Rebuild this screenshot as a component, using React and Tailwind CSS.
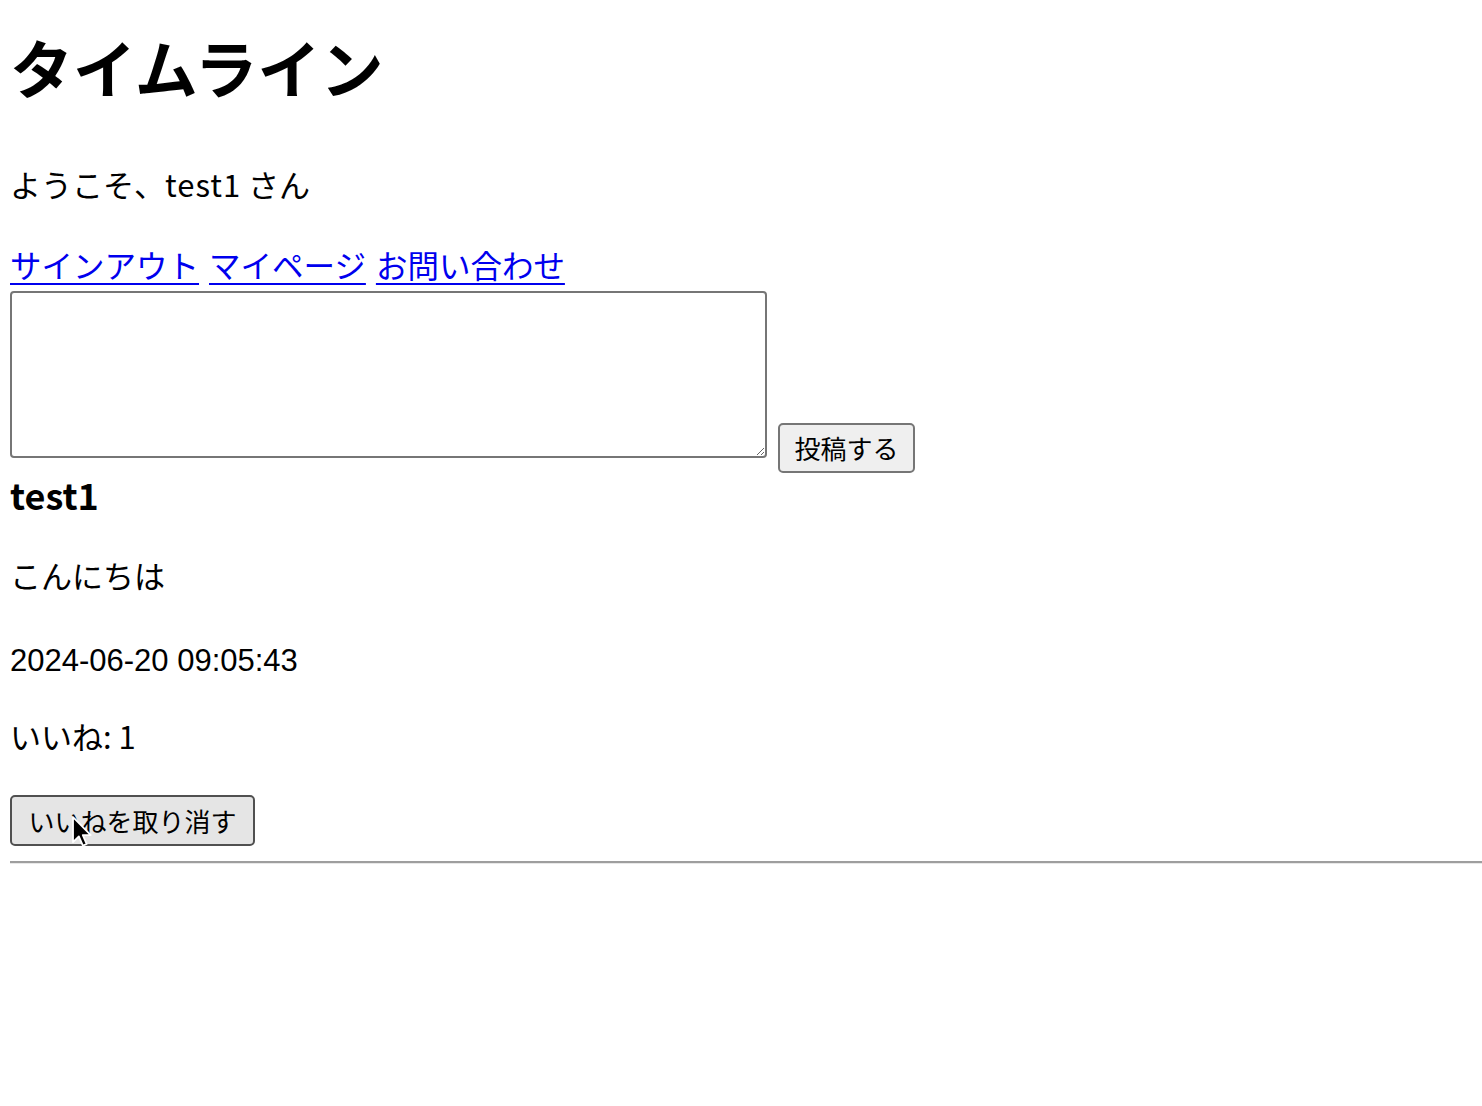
import React from 'react';

const jp = "font-['Noto_Sans_CJK_JP','Noto_Sans',sans-serif]";

const Cursor = () => (
  <svg className="absolute left-[61px] top-[20px] w-[23px] h-[34px] pointer-events-none" viewBox="0 0 17 25">
    <path
      d="M1.5 1.5 L1.5 20 L5.8 15.8 L8.8 22.6 L11.6 21.4 L8.7 14.8 L14.6 14.8 Z"
      fill="#000"
      stroke="#fff"
      strokeWidth="1.3"
      strokeLinejoin="round"
    />
  </svg>
);

const Timeline = () => {
  const posts = [
    { id: 1, user: 'test1', body: 'こんにちは', createdAt: '2024-06-20 09:05:43', likes: 1 },
  ];

  return (
    <div className={`min-h-screen bg-white text-black ${jp}`}>
      <div className="pl-[10px]">
        <h1 className="mt-[16px] h-[100px] text-[63px] leading-[100px] font-bold">タイムライン</h1>

        <p className="mt-[43px] text-[31px] leading-[50px]">
          ようこそ、<span className="tracking-[1px]">test1</span> さん
        </p>

        <div className="mt-[30px] text-[31.5px] leading-[50px] text-[#0000ee] flex gap-[10px]">
          <a href="#" className="underline underline-offset-[5px] decoration-2">サインアウト</a>
          <a href="#" className="underline underline-offset-[5px] decoration-2">マイページ</a>
          <a href="#" className="underline underline-offset-[5px] decoration-2">お問い合わせ</a>
        </div>

        <form className="mt-[2px] flex items-start" onSubmit={(e) => e.preventDefault()}>
          <textarea className="w-[757px] h-[167px] border-2 border-[#767676] rounded-[4px] bg-white" />
          <button
            type="submit"
            className="ml-[11px] mt-[132px] w-[137px] h-[50px] border-2 border-[#767676] rounded-[5px] bg-[#efefef] text-[26px] leading-none"
          >
            投稿する
          </button>
        </form>

        {posts.map((post) => (
          <div key={post.id}>
            <h3 className="mt-[-4px] h-[50px] text-[36px] leading-[50px] font-bold">{post.user}</h3>
            <p className="mt-[31px] text-[31px] leading-[50px]">{post.body}</p>
            <p className="mt-[36px] text-[31px] leading-[50px] font-['Liberation_Sans',Arial,sans-serif]">
              {post.createdAt}
            </p>
            <p className="mt-[25px] text-[31px] leading-[50px]">いいね: {post.likes}</p>
            <div className="relative mt-[34px] w-fit">
              <button className="w-[245px] h-[51px] border-2 border-[#505050] rounded-[5px] bg-[#e5e5e5] text-[26px] leading-none">
                いいねを取り消す
              </button>
              <Cursor />
            </div>
            <div className="mt-[15px] h-[2px] bg-[#9e9e9e]" />
            <div className="h-[1px] bg-[#e8e8e8]" />
          </div>
        ))}
      </div>
    </div>
  );
};

export default function App() {
  return <Timeline />;
}
